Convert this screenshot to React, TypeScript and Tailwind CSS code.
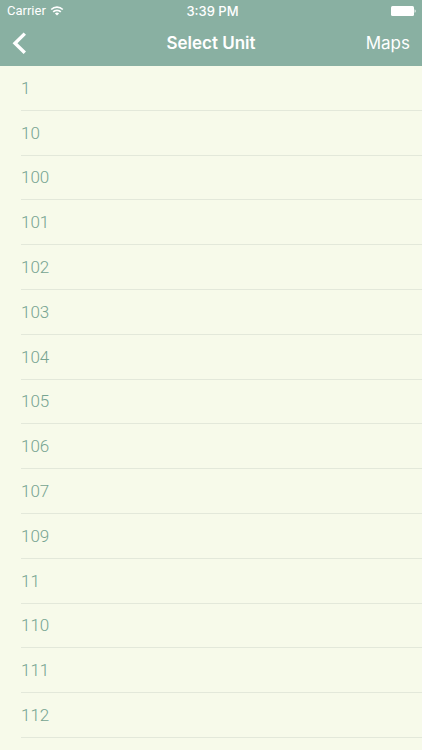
const units = ['1', '10', '100', '101', '102', '103', '104', '105', '106', '107', '109', '11', '110', '111', '112'];

function StatusBar() {
  return (
    <div className="grid grid-cols-3 items-center h-5 pt-0.5 pl-[7px] pr-1 text-[13px] leading-4">
      <div className="flex items-center gap-1">
        <span className="font-[Roboto,sans-serif]">Carrier</span>
        <svg className="w-[14px] h-[10px]" viewBox="0 0 14 10" fill="none" stroke="currentColor" strokeWidth="1.7" aria-hidden="true">
          <path d="M1.2 3.5a8.3 8.3 0 0 1 11.6 0" />
          <path d="M3.2 5.9a5.4 5.4 0 0 1 7.6 0" />
          <path d="M7 9.6 4.9 7.5a2.9 2.9 0 0 1 4.2 0z" fill="currentColor" stroke="none" />
        </svg>
      </div>
      <span className="text-center font-medium">3:39 PM</span>
      <svg className="w-[27px] h-[10px] justify-self-end" viewBox="0 0 27 10" fill="currentColor" aria-hidden="true">
        <rect x="0" y="0" width="23" height="10" rx="1.5" />
        <path d="M23.6 3.2c1.4.4 1.4 3.2 0 3.6z" />
      </svg>
    </div>
  );
}

function NavBar() {
  return (
    <nav className="grid grid-cols-3 items-center h-[46px] px-3 text-[17px] leading-6">
      <button type="button" aria-label="Back" className="justify-self-start">
        <svg className="w-[15px] h-[22px]" viewBox="0 0 15 22" fill="none" stroke="currentColor" strokeWidth="3.4" aria-hidden="true">
          <path d="M12.8 1.6 3 11.2l9.8 9.6" />
        </svg>
      </button>
      <h1 className="text-center font-semibold whitespace-nowrap">Select Unit</h1>
      <button type="button" className="justify-self-end">Maps</button>
    </nav>
  );
}

export default function App() {
  return (
    <div className="flex flex-col min-h-screen bg-[#f7faea] font-[Inter,sans-serif]">
      <header className="bg-[#89b0a2] text-white">
        <StatusBar />
        <NavBar />
      </header>
      <main className="flex flex-col flex-1 pb-3">
        <ul className="grid flex-1 auto-rows-fr pl-[21px]">
          {units.map((unit) => (
            <li key={unit} className="flex min-h-11 border-b border-[#e3e8da]">
              <a
                href={`#unit-${unit}`}
                className="flex flex-1 items-center text-[17px] leading-6 font-light text-[#76a491] font-[Roboto,sans-serif]"
              >
                {unit}
              </a>
            </li>
          ))}
        </ul>
      </main>
    </div>
  );
}
